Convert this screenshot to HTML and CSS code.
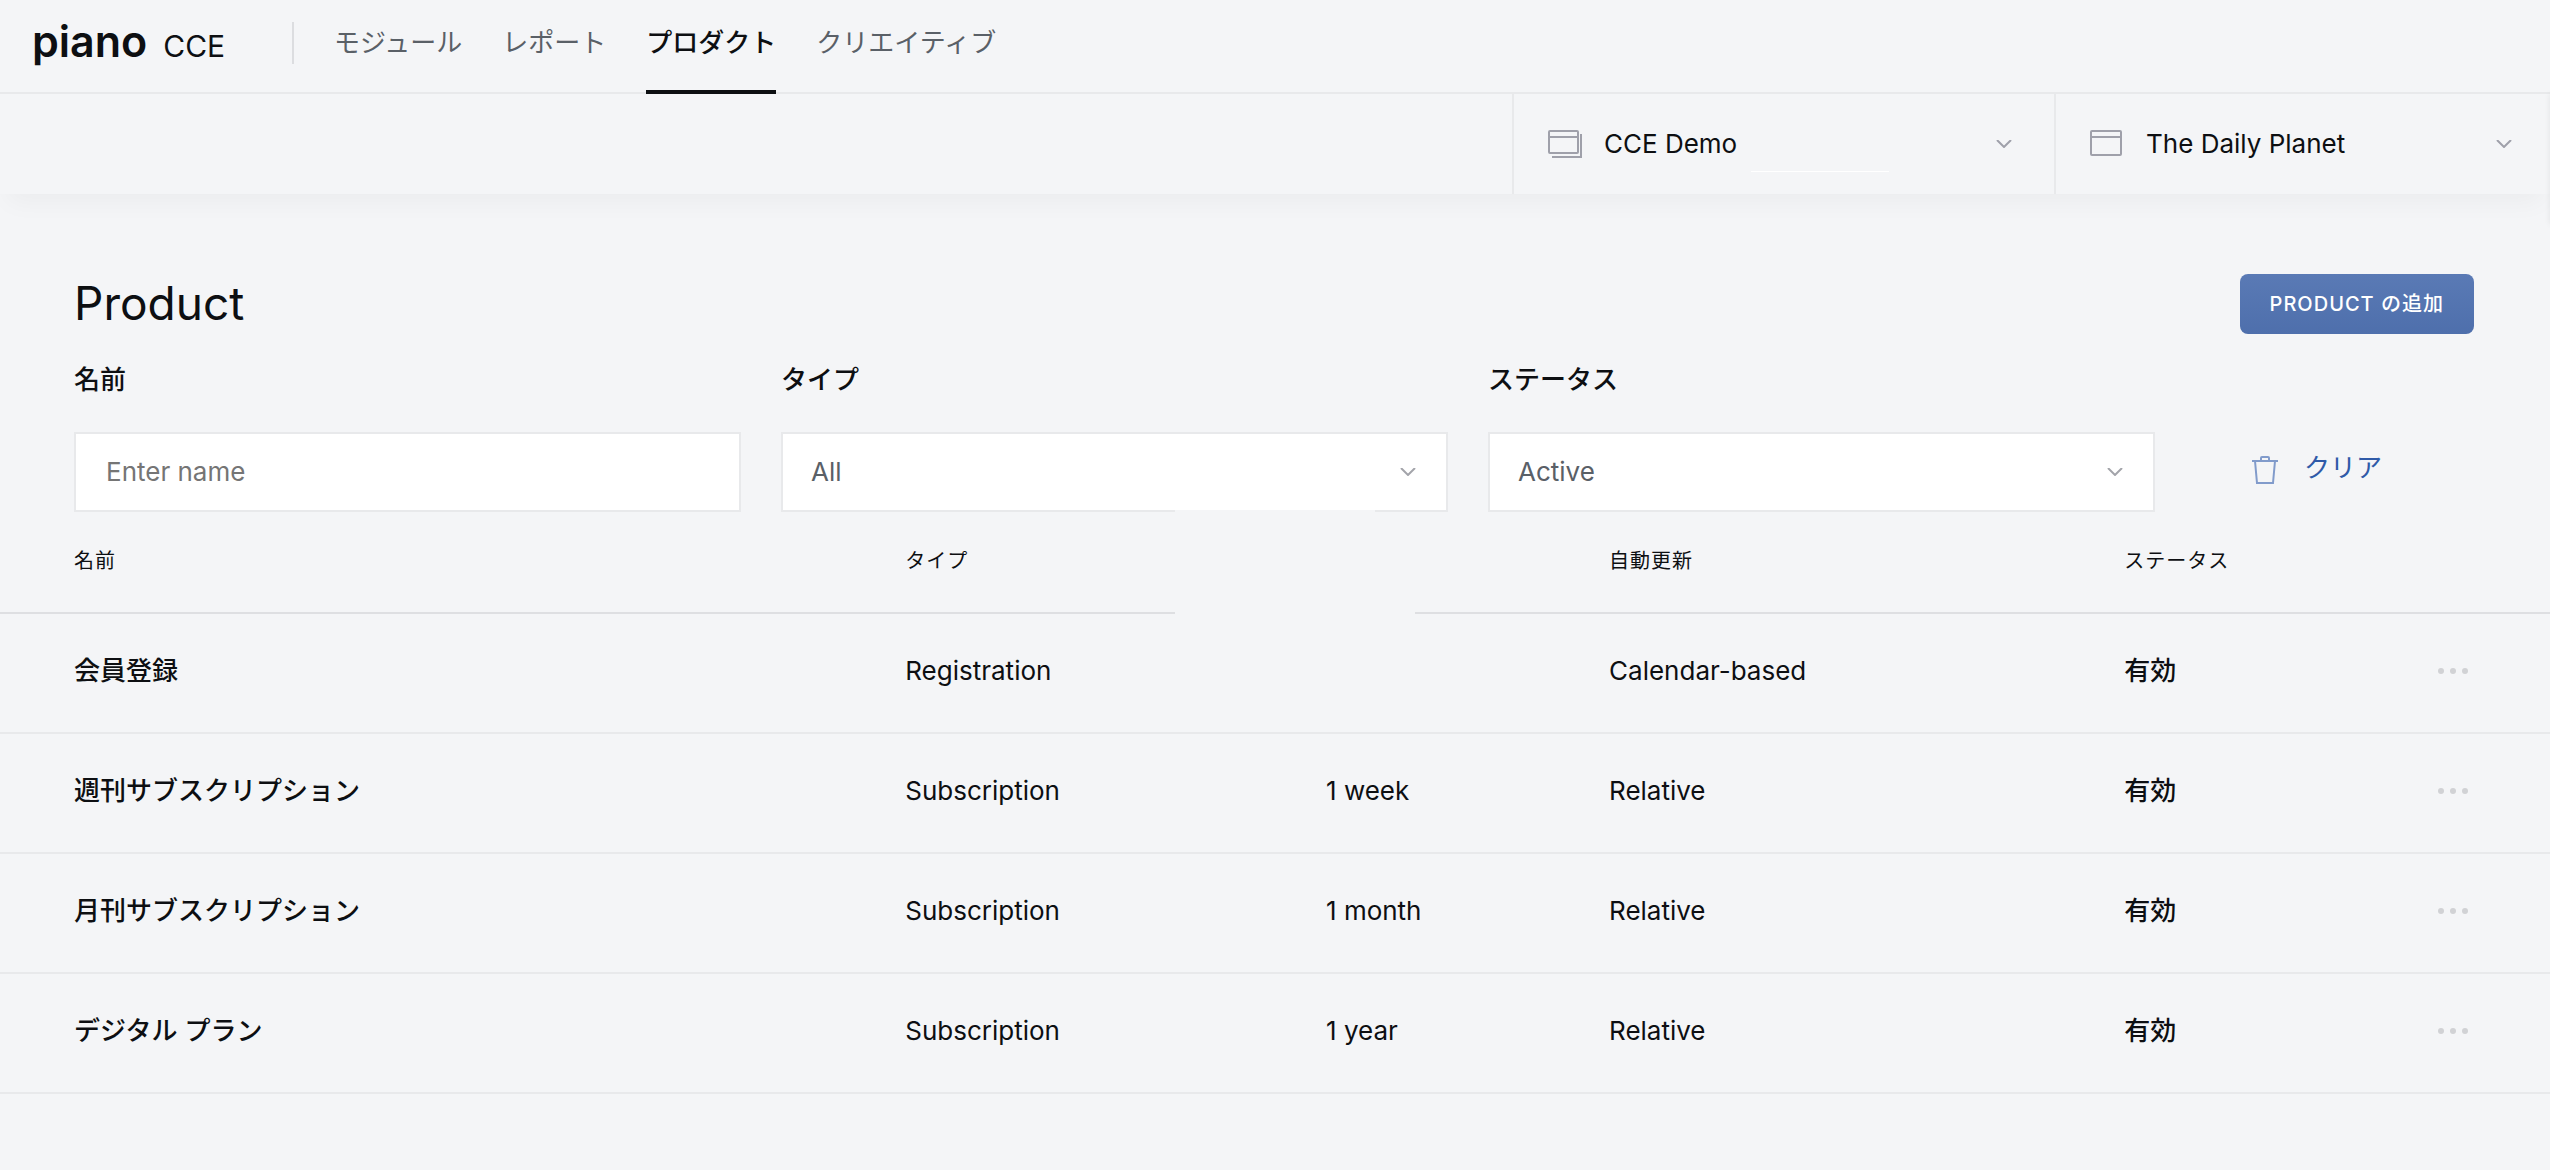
FILE: index.html
```html
<!DOCTYPE html>
<html lang="ja">
<head>
<meta charset="utf-8">
<title>Product - Piano CCE</title>
<link rel="stylesheet" href="styles.css">
</head>
<body>
<header class="topbar">
  <a class="brand" href="#"><span class="brand-name">piano</span><span class="brand-app">CCE</span></a>
  <nav class="nav">
    <a class="nav-link" href="#">モジュール</a>
    <a class="nav-link" href="#">レポート</a>
    <a class="nav-link is-active" href="#" aria-current="page">プロダクト</a>
    <a class="nav-link" href="#">クリエイティブ</a>
  </nav>
</header>

<div class="context-bar">
  <div class="context context-org">
    <svg class="context-icon" width="34" height="28" viewBox="0 0 34 28" fill="none" stroke="#9fa0aa" stroke-width="2" aria-hidden="true">
      <rect x="1" y="1" width="29" height="22" rx="1"/><path d="M1 7h29M33 4v23H4"/>
    </svg>
    <select class="context-select" aria-label="Organization"><option>CCE Demo</option></select>
    <svg class="chevron" width="16" height="8" viewBox="0 0 16 8" fill="none" stroke="#9fa0aa" stroke-width="2" aria-hidden="true"><path d="M1 0l7 7 7-7"/></svg>
    <span class="context-rule"></span>
  </div>
  <div class="context context-site">
    <svg class="context-icon" width="34" height="28" viewBox="0 0 34 28" fill="none" stroke="#9fa0aa" stroke-width="2" aria-hidden="true">
      <rect x="1" y="1" width="30" height="24" rx="1"/><path d="M1 7h30"/>
    </svg>
    <select class="context-select" aria-label="Site"><option>The Daily Planet</option></select>
    <svg class="chevron" width="16" height="8" viewBox="0 0 16 8" fill="none" stroke="#9fa0aa" stroke-width="2" aria-hidden="true"><path d="M1 0l7 7 7-7"/></svg>
  </div>
</div>

<main class="page">
  <div class="page-head">
    <h1 class="page-title">Product</h1>
    <button class="add-button" type="button">PRODUCT の追加</button>
  </div>

  <form class="filters">
    <div class="field">
      <label class="field-label" for="name">名前</label>
      <input class="control" id="name" type="text" placeholder="Enter name">
    </div>
    <div class="field">
      <label class="field-label" for="type">タイプ</label>
      <div class="select-box">
        <select class="control" id="type"><option>All</option></select>
        <svg class="chevron" width="16" height="8" viewBox="0 0 16 8" fill="none" stroke="#a3a4aa" stroke-width="2" aria-hidden="true"><path d="M1 0l7 7 7-7"/></svg>
      </div>
    </div>
    <div class="field">
      <label class="field-label" for="status">ステータス</label>
      <div class="select-box">
        <select class="control" id="status"><option>Active</option></select>
        <svg class="chevron" width="16" height="8" viewBox="0 0 16 8" fill="none" stroke="#a3a4aa" stroke-width="2" aria-hidden="true"><path d="M1 0l7 7 7-7"/></svg>
      </div>
    </div>
    <button class="clear-button" type="reset">
      <svg width="26" height="28" viewBox="0 0 26 28" fill="none" stroke="#819bcb" stroke-width="2" aria-hidden="true">
        <path d="M0 5h26M9 5V2q0-1 1-1h6q1 0 1 1v3M3 5l2 22h16l2-22"/>
      </svg>
      <span>クリア</span>
    </button>
  </form>

  <div class="table-wrap">
    <table class="products">
      <colgroup><col class="col-name"><col class="col-type"><col class="col-period"><col class="col-renewal"><col></colgroup>
      <thead>
        <tr><th>名前</th><th>タイプ</th><th></th><th>自動更新</th><th>ステータス</th></tr>
      </thead>
      <tbody>
        <tr><td>会員登録</td><td>Registration</td><td></td><td>Calendar-based</td>
          <td><div class="status">有効<button class="more" type="button" aria-label="Menu"><i></i><i></i><i></i></button></div></td></tr>
        <tr><td>週刊サブスクリプション</td><td>Subscription</td><td>1 week</td><td>Relative</td>
          <td><div class="status">有効<button class="more" type="button" aria-label="Menu"><i></i><i></i><i></i></button></div></td></tr>
        <tr><td>月刊サブスクリプション</td><td>Subscription</td><td>1 month</td><td>Relative</td>
          <td><div class="status">有効<button class="more" type="button" aria-label="Menu"><i></i><i></i><i></i></button></div></td></tr>
        <tr><td>デジタル プラン</td><td>Subscription</td><td>1 year</td><td>Relative</td>
          <td><div class="status">有効<button class="more" type="button" aria-label="Menu"><i></i><i></i><i></i></button></div></td></tr>
      </tbody>
    </table>
  </div>
</main>
</body>
</html>
```
FILE: styles.css
```css
:root {
  --bg: #f4f5f7;
  --ink: #0d0f12;
  --muted: #5a6067;
  --line: #e8e9eb;
  --font: Inter, "Noto Sans CJK JP", sans-serif;
}

* { box-sizing: border-box; }

body {
  margin: 0;
  background: var(--bg);
  color: var(--ink);
  font: 26px/40px var(--font);
  overflow-x: hidden;
}

button, input, select { font: inherit; color: inherit; }

button { cursor: pointer; }

/* Top navigation */
.topbar {
  display: flex;
  height: 94px;
  padding-left: 32px;
  border-bottom: 2px solid var(--line);
}

.brand {
  display: flex;
  align-items: baseline;
  gap: 16px;
  width: 260px;
  height: 82px;
  line-height: 82px;
  color: var(--ink);
  text-decoration: none;
}

.brand-name { font-size: 43px; font-weight: 600; }
.brand-app { font-size: 30px; }

.nav {
  display: flex;
  gap: 40px;
  padding-left: 41px;
}

.nav::before {
  content: "";
  width: 2px;
  height: 42px;
  margin: 22px 0 0 -41px;
  background: #dcdde0;
}

.nav-link {
  height: 94px;
  border-bottom: 4px solid transparent;
  line-height: 86px;
  color: var(--muted);
  text-decoration: none;
}

.nav-link.is-active {
  color: var(--ink);
  border-color: var(--ink);
  font-weight: 500;
}

/* Organization and site pickers */
.context-bar {
  position: relative;
  display: flex;
  justify-content: flex-end;
  height: 100px;
  box-shadow: 0 16px 24px -8px rgba(0, 0, 0, .04);
}

.context-bar::after {
  content: "";
  position: absolute;
  left: 100%;
  top: 0;
  width: 20px;
  height: 130px;
  box-shadow: 0 0 6px rgba(0, 0, 0, .08);
}

.context {
  position: relative;
  display: grid;
  grid-template-columns: 100%;
  align-items: center;
  border-left: 2px solid var(--line);
}

.context-org { width: 542px; }
.context-site { width: 496px; }

.context > *, .select-box > * { grid-area: 1 / 1; }

.context-icon {
  margin-left: 34px;
  pointer-events: none;
}

.context-select {
  width: 100%;
  height: 100px;
  padding: 0 72px 0 90px;
  border: 0;
  background: none;
  appearance: none;
}

.chevron {
  justify-self: end;
  margin-right: 38px;
  pointer-events: none;
}

.context-org .chevron { margin-right: 42px; }

.context-rule {
  position: absolute;
  left: 237px;
  top: 77px;
  width: 138px;
  height: 1px;
  background: #fff;
}

/* Page heading */
.page { padding-top: 80px; }

.page-head {
  display: flex;
  justify-content: space-between;
  height: 60px;
  padding: 0 76px 0 74px;
}

.page-title {
  margin: 0;
  font-size: 46px;
  font-weight: 400;
  line-height: 58px;
}

.add-button {
  height: 60px;
  padding: 0 30px;
  border: 0;
  border-radius: 8px;
  background: linear-gradient(#5a7ab5, #4e6fac);
  color: #fff;
  font-size: 20px;
  font-weight: 500;
  letter-spacing: 1px;
}

/* Filters */
.filters {
  display: grid;
  grid-template-columns: 1fr 1fr 1fr 279px;
  gap: 40px;
  padding: 26px 76px 0 74px;
}

.field-label {
  display: block;
  margin-bottom: 32px;
  font-weight: 500;
}

.control {
  display: block;
  width: 100%;
  height: 80px;
  padding: 0 30px 2px;
  border: 2px solid var(--line);
  border-radius: 0;
  background: #fff;
  color: var(--muted);
  appearance: none;
}

select.control { padding: 0 28px; }

.control::placeholder { color: #757575; }

.select-box {
  display: grid;
  align-items: center;
}

.select-box .chevron { margin-right: 32px; }

.clear-button {
  display: flex;
  align-self: end;
  align-items: center;
  gap: 26px;
  height: 80px;
  margin-left: 57px;
  padding: 0 0 4px;
  border: 0;
  background: none;
  color: #2f5aa8;
}

.clear-button span { padding-bottom: 4px; }

/* Product table */
.table-wrap { position: relative; }

/* Blank area over the unlabelled column heading */
.table-wrap::before,
.table-wrap::after {
  content: "";
  position: absolute;
  left: 1175px;
  top: -2px;
  width: 200px;
  height: 104px;
  background: var(--bg);
}

.table-wrap::after {
  top: 0;
  width: 240px;
  height: 102px;
}

.products {
  width: 100%;
  border-collapse: separate;
  border-spacing: 0;
  table-layout: fixed;
}

.col-name { width: 35.5%; }
.col-type { width: 16.5%; }
.col-period { width: 11.1%; }
.col-renewal { width: 20.2%; }

.products th {
  height: 102px;
  padding: 0 0 2px;
  border-bottom: 2px solid #dedfe2;
  font-size: 20px;
  font-weight: 400;
  letter-spacing: 1px;
  text-align: left;
}

.products td {
  height: 120px;
  padding: 0 0 4px;
  border-bottom: 2px solid var(--line);
}

.products td:first-child,
.products td:last-child { font-weight: 500; }

.products th:first-child,
.products td:first-child { padding-left: 74px; }

.status {
  display: flex;
  justify-content: space-between;
  align-items: center;
  padding-right: 76px;
}

.more {
  display: flex;
  gap: 6px;
  padding: 12px 6px;
  border: 0;
  background: none;
}

.more i {
  width: 6px;
  height: 6px;
  border-radius: 50%;
  background: #d1d2d5;
}
```
